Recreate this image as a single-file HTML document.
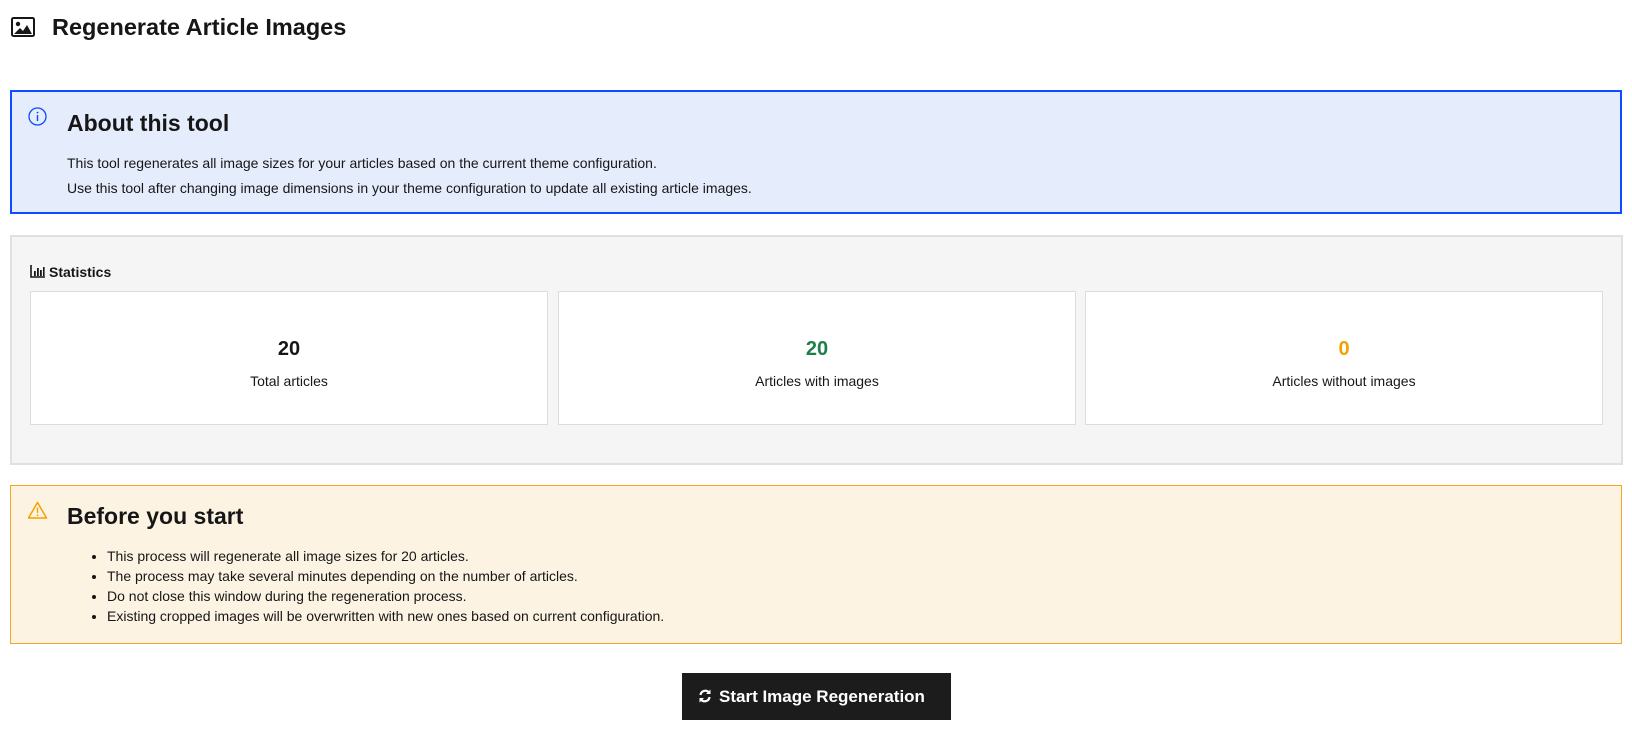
<!DOCTYPE html>
<html><head><meta charset="utf-8"><style>
*{box-sizing:border-box;margin:0;padding:0}
body{width:1632px;height:730px;background:#fff;font-family:"Liberation Sans",sans-serif;color:#161616;position:relative;overflow:hidden}
.a{position:absolute}
.t{font-size:14px;line-height:20px;white-space:nowrap}
.card{position:absolute;top:291px;width:518px;height:134px;background:#fff;border:1px solid #dcdcdc;text-align:center}
.card .n{position:absolute;left:0;right:0;top:45px;font-size:20px;font-weight:bold;line-height:24px}
.card .l{position:absolute;left:0;right:0;top:79px;font-size:14px;line-height:20px}
</style></head><body>
<svg class="a" style="left:11px;top:17px" width="24" height="20" viewBox="0 0 24 20"><rect x="1" y="1" width="22" height="18" rx="1.5" fill="none" stroke="#161616" stroke-width="2"/><circle cx="7" cy="7" r="2.2" fill="#161616"/><path d="M3 17 L9 11 L12 14 L16 8 L21 17 Z" fill="#161616"/></svg>
<div class="a" style="left:52px;top:12px;font-size:23.5px;font-weight:bold;line-height:30px">Regenerate Article Images</div>

<div class="a" style="left:10px;top:90px;width:1612px;height:124px;background:#e5ecfc;border:2px solid #0f4bff"></div>
<svg class="a" style="left:28px;top:107px" width="19" height="19" viewBox="0 0 19 19"><circle cx="9.5" cy="9.5" r="8.5" fill="none" stroke="#0f4bff" stroke-width="1.3"/><rect x="8.8" y="8" width="1.4" height="6" fill="#0f4bff"/><circle cx="9.5" cy="5.6" r="0.9" fill="#0f4bff"/></svg>
<div class="a" style="left:67px;top:108px;font-size:23px;font-weight:bold;line-height:30px">About this tool</div>
<div class="a t" style="left:67px;top:153px">This tool regenerates all image sizes for your articles based on the current theme configuration.</div>
<div class="a t" style="left:67px;top:178px">Use this tool after changing image dimensions in your theme configuration to update all existing article images.</div>

<div class="a" style="left:10px;top:235px;width:1613px;height:230px;background:#f5f5f5;border:2px solid #e0e0e0"></div>
<svg class="a" style="left:30px;top:265px" width="15" height="13" viewBox="0 0 15 13"><path d="M1 0V12H15" fill="none" stroke="#161616" stroke-width="1.6"/><rect x="4" y="6" width="1.8" height="5" fill="#161616"/><rect x="7" y="3" width="1.8" height="8" fill="#161616"/><rect x="10" y="5" width="1.8" height="6" fill="#161616"/><rect x="13" y="2" width="1.6" height="9" fill="#161616"/></svg>
<div class="a" style="left:49px;top:263px;font-size:14px;font-weight:bold;line-height:18px">Statistics</div>
<div class="card" style="left:30px"><div class="n">20</div><div class="l">Total articles</div></div>
<div class="card" style="left:558px"><div class="n" style="color:#1e7e4a">20</div><div class="l">Articles with images</div></div>
<div class="card" style="left:1085px"><div class="n" style="color:#f0a400">0</div><div class="l">Articles without images</div></div>

<div class="a" style="left:10px;top:485px;width:1612px;height:159px;background:#fdf3e3;border:1px solid #f5a623"></div>
<svg class="a" style="left:27px;top:501px" width="21" height="18" viewBox="0 0 21 18"><path d="M10.5 1.5 L19.5 17 H1.5 Z" fill="none" stroke="#f5a000" stroke-width="1.5" stroke-linejoin="round"/><rect x="9.8" y="6.5" width="1.4" height="5.5" fill="#f5a000"/><circle cx="10.5" cy="14.3" r="0.9" fill="#f5a000"/></svg>
<div class="a" style="left:67px;top:501px;font-size:23px;font-weight:bold;line-height:30px">Before you start</div>
<ul class="a t" style="left:107px;top:546px;list-style:disc">
<li style="height:20px">This process will regenerate all image sizes for 20 articles.</li>
<li style="height:20px">The process may take several minutes depending on the number of articles.</li>
<li style="height:20px">Do not close this window during the regeneration process.</li>
<li style="height:20px">Existing cropped images will be overwritten with new ones based on current configuration.</li>
</ul>

<div class="a" style="left:682px;top:673px;width:269px;height:47px;background:#1c1c1c"></div>
<svg class="a" style="left:698px;top:689px" width="14" height="14" viewBox="0 0 14 14"><path d="M2.5 6 A4.8 4.8 0 0 1 11 3.5 M11.5 8 A4.8 4.8 0 0 1 3 10.5" fill="none" stroke="#fff" stroke-width="2.2"/><path d="M12.5 0.5 V5 H8 Z M1.5 13.5 V9 H6 Z" fill="#fff"/></svg>
<div class="a" style="left:719px;top:686px;font-size:17px;font-weight:bold;color:#fff;line-height:22px;white-space:nowrap">Start Image Regeneration</div>
</body></html>
